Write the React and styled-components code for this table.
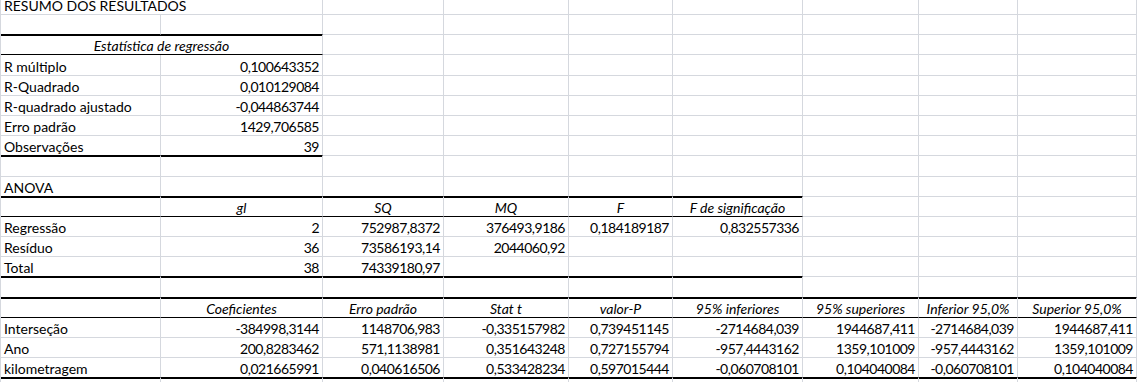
import React from 'react';
import styled, { createGlobalStyle } from 'styled-components';

const GRID = '#d5d8de';
const COLS = [160, 162, 121, 125, 104, 130, 116, 99, 119];

const GlobalStyle = createGlobalStyle`
  html, body {
    margin: 0;
    padding: 0;
    background: #ffffff;
    overflow: hidden;
  }
`;

const Sheet = styled.div`
  display: grid;
  grid-template-columns: ${COLS.map((w) => `${w}px`).join(' ')};
  grid-template-rows: 15px;
  grid-auto-rows: 20.2px;
  width: max-content;
  border-left: 1px solid ${GRID};
  font-family: Lato, "Open Sans", sans-serif;
  font-size: 14px;
  color: #000;
`;

// medium rule: the gridline pixel plus one pixel spilling into the row below
const ruleFor = (rule) => {
  if (rule === 'thick') return 'border-bottom: 1px solid #000; box-shadow: 0 1px 0 #000;';
  if (rule === 'thin') return 'border-bottom: 1px solid #000;';
  return `border-bottom: 1px solid ${GRID};`;
};

const Cell = styled.div`
  grid-column: span ${(p) => p.$span};
  box-sizing: border-box;
  display: flex;
  align-items: flex-end;
  justify-content: ${(p) => p.$align};
  padding: 0 3px 1px 3px;
  border-right: 1px solid ${GRID};
  ${(p) => ruleFor(p.$rule)}
  font-style: ${(p) => (p.$italic ? 'italic' : 'normal')};
  letter-spacing: ${(p) => (p.$num ? '-0.5px' : 'normal')};
  line-height: 14px;
  white-space: nowrap;
`;

const ALIGN = { left: 'flex-start', right: 'flex-end', center: 'center' };

// one sheet row: cells are filled up to the 9 columns, rule marks the bottom edge of the first ruleTo columns
const Row = ({ cells = [], rule, ruleTo = 0 }) => {
  const out = [];
  let col = 0;
  cells.forEach((c) => {
    const cell = typeof c === 'string' ? { text: c } : c;
    const span = cell.span || 1;
    const align = cell.align || (col === 0 ? 'left' : 'right');
    out.push(
      <Cell
        key={col}
        $span={span}
        $align={ALIGN[align]}
        $italic={cell.italic}
        $num={align === 'right'}
        $rule={col < ruleTo ? rule : undefined}
      >
        {cell.text}
      </Cell>,
    );
    col += span;
  });
  while (col < COLS.length) {
    out.push(<Cell key={col} $span={1} $align="flex-start" $rule={col < ruleTo ? rule : undefined} />);
    col += 1;
  }
  return <>{out}</>;
};

const head = (text) => ({ text, italic: true, align: 'center' });

const stats = [
  ['R múltiplo', '0,100643352'],
  ['R-Quadrado', '0,010129084'],
  ['R-quadrado ajustado', '-0,044863744'],
  ['Erro padrão', '1429,706585'],
  ['Observações', '39'],
];

const anova = [
  ['Regressão', '2', '752987,8372', '376493,9186', '0,184189187', '0,832557336'],
  ['Resíduo', '36', '73586193,14', '2044060,92'],
  ['Total', '38', '74339180,97'],
];

const coefHeaders = ['Coeficientes', 'Erro padrão', 'Stat t', 'valor-P', '95% inferiores', '95% superiores', 'Inferior 95,0%', 'Superior 95,0%'];

const coefs = [
  ['Interseção', '-384998,3144', '1148706,983', '-0,335157982', '0,739451145', '-2714684,039', '1944687,411', '-2714684,039', '1944687,411'],
  ['Ano', '200,8283462', '571,1138981', '0,351643248', '0,727155794', '-957,4443162', '1359,101009', '-957,4443162', '1359,101009'],
  ['kilometragem', '0,021665991', '0,040616506', '0,533428234', '0,597015444', '-0,060708101', '0,104040084', '-0,060708101', '0,104040084'],
];

const App = () => (
  <>
    <GlobalStyle />
    <Sheet>
      <Row cells={[{ text: 'RESUMO DOS RESULTADOS', span: 2 }]} />
      <Row rule="thick" ruleTo={2} />
      <Row cells={[{ ...head('Estatística de regressão'), span: 2 }]} rule="thin" ruleTo={2} />
      {stats.map((r, i) => (
        <Row key={r[0]} cells={r} rule={i === stats.length - 1 ? 'thick' : undefined} ruleTo={2} />
      ))}
      <Row />
      <Row cells={['ANOVA']} rule="thick" ruleTo={6} />
      <Row cells={['', head('gl'), head('SQ'), head('MQ'), head('F'), head('F de significação')]} rule="thin" ruleTo={6} />
      {anova.map((r, i) => (
        <Row key={r[0]} cells={r} rule={i === anova.length - 1 ? 'thick' : undefined} ruleTo={6} />
      ))}
      <Row rule="thick" ruleTo={9} />
      <Row cells={['', ...coefHeaders.map(head)]} rule="thin" ruleTo={9} />
      {coefs.map((r, i) => (
        <Row key={r[0]} cells={r} rule={i === coefs.length - 1 ? 'thick' : undefined} ruleTo={9} />
      ))}
      <Row />
    </Sheet>
  </>
);

export default App;
